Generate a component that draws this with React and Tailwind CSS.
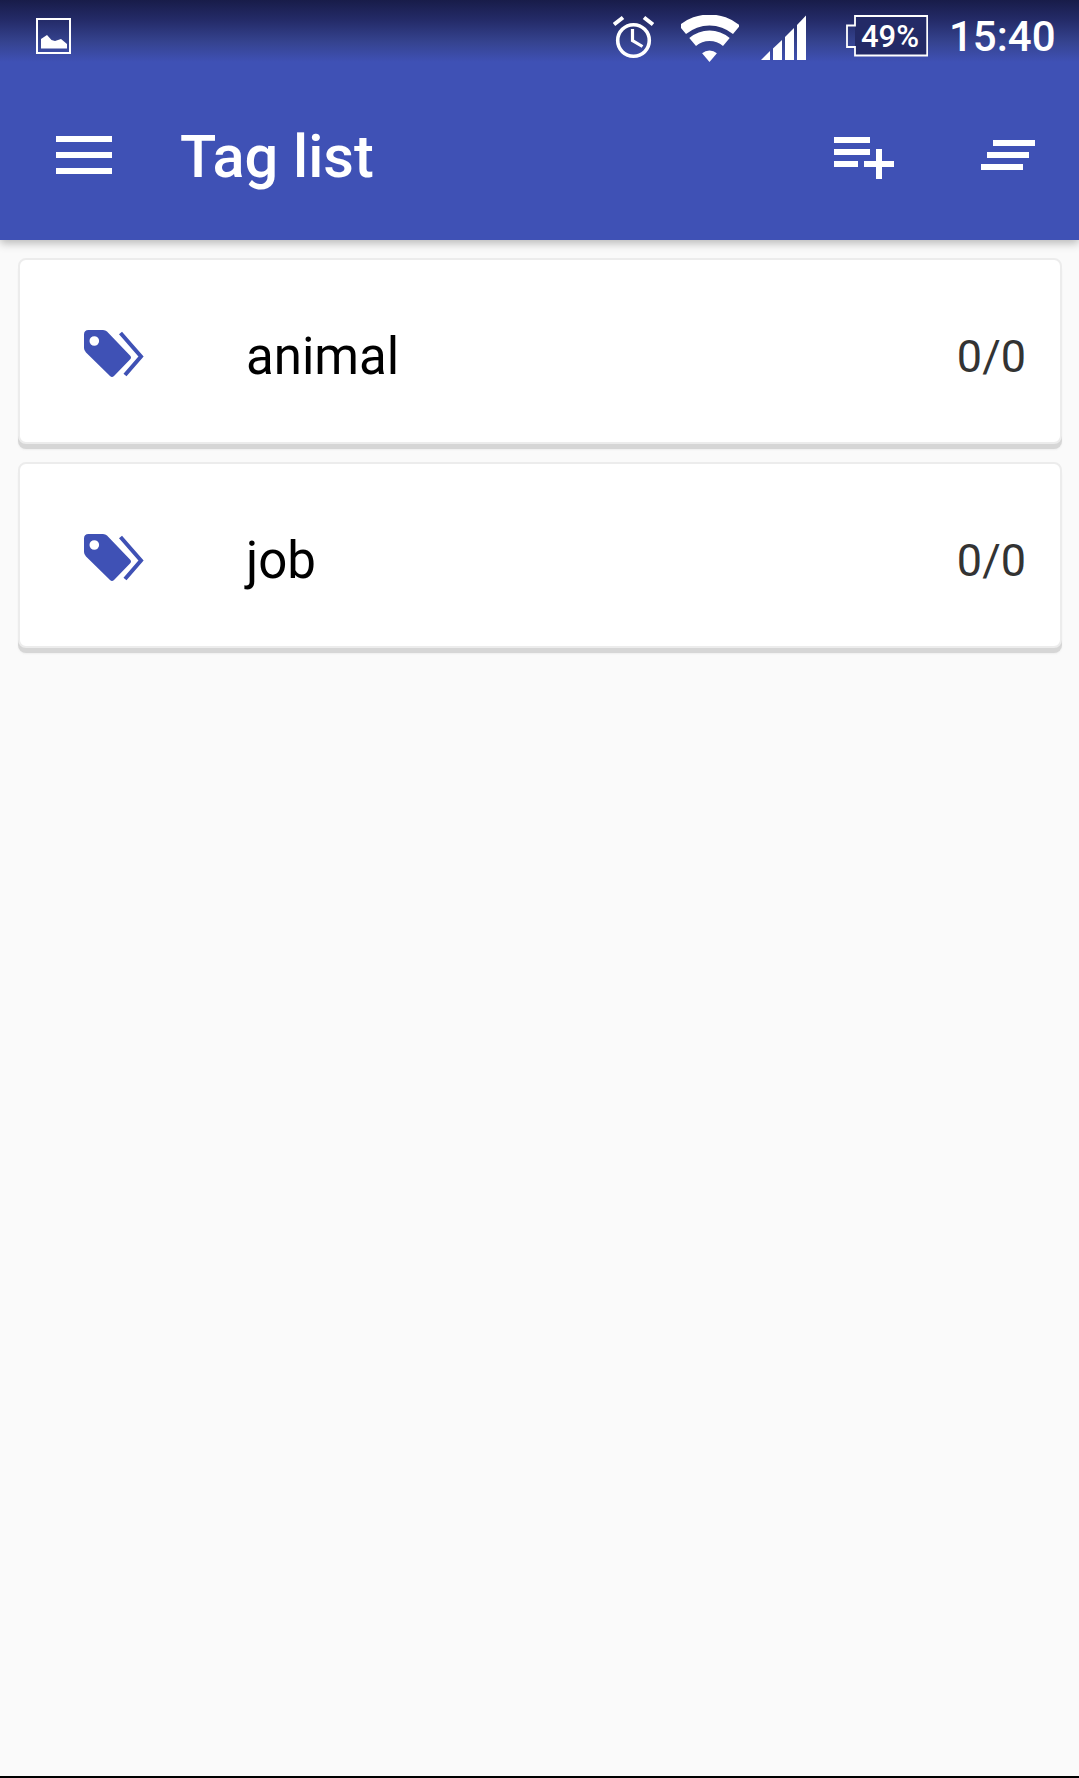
const sector = (r1, r2, a = 40) => {
  const s = Math.sin((a * Math.PI) / 180);
  const c = Math.cos((a * Math.PI) / 180);
  const cx = 28.5;
  const cy = 47;
  const p = (r, sign) => `${(cx + sign * r * s).toFixed(1)} ${(cy - r * c).toFixed(1)}`;
  if (r2 === 0) return `M${cx} ${cy}L${p(r1, -1)}A${r1} ${r1} 0 0 1 ${p(r1, 1)}Z`;
  return `M${p(r2, -1)}L${p(r1, -1)}A${r1} ${r1} 0 0 1 ${p(r1, 1)}L${p(r2, 1)}A${r2} ${r2} 0 0 0 ${p(r2, -1)}Z`;
};

function ImageIcon() {
  return (
    <svg width="35" height="36" viewBox="0 0 35 36" fill="none" className="mt-[18px] ml-[36px] shrink-0">
      <rect x="1" y="1" width="33" height="34" stroke="white" strokeWidth="2" />
      <path d="M5 30.500V21L11 17L15.500 22L19 23L25 21L31 26V30.500Z" fill="white" />
    </svg>
  );
}

function AlarmIcon() {
  return (
    <svg width="42" height="44" viewBox="0 0 42 44" fill="none" className="mt-[15px] shrink-0" stroke="white">
      <circle cx="20.500" cy="25.500" r="15.800" strokeWidth="3.600" />
      <path d="M19.500 14V25.500L29.500 31.500" strokeWidth="3.200" />
      <path d="M1 9.500L10 2.500M31 2.500L40 9.500" strokeWidth="4" />
    </svg>
  );
}

function WifiIcon() {
  return (
    <svg width="58" height="47" viewBox="0 0 58 47" fill="white" className="mt-[15px] shrink-0">
      <path d={sector(47.5, 36.5)} />
      <path d={sector(31.5, 21)} />
      <path d={sector(11.5, 0)} />
    </svg>
  );
}

function SignalIcon() {
  return (
    <svg width="45" height="45" viewBox="0 0 45 45" fill="white" className="mt-[15px] shrink-0">
      <path d="M0 45L9 36V45Z" />
      <path d="M12 33.500L21 25V45H12Z" />
      <path d="M24 22L33 13V45H24Z" />
      <path d="M36 10L45 0.500V45H36Z" />
    </svg>
  );
}

function Battery() {
  return (
    <div className="relative mt-[15px] w-[82px] h-[42px] shrink-0 flex items-center justify-end pr-[9px]">
      <svg width="82" height="42" viewBox="0 0 82 42" className="absolute inset-0">
        <path d="M9 2H81V40.500H9Z" fill="#232a66" />
        <path
          d="M9 1H81.200V40.500H9V32H1V10.500H9Z"
          fill="none"
          stroke="white"
          strokeWidth="1.800"
        />
      </svg>
      <span className="relative text-white text-[31px] leading-none font-medium">49%</span>
    </div>
  );
}

function MenuIcon() {
  return (
    <svg width="56" height="38" viewBox="0 0 56 38" fill="white" className="shrink-0">
      <rect y="0" width="56" height="6" />
      <rect y="16" width="56" height="6" />
      <rect y="32" width="56" height="6" />
    </svg>
  );
}

function AddListIcon() {
  return (
    <svg width="60" height="42" viewBox="0 0 60 42" fill="white" className="shrink-0 mt-[3px]">
      <rect x="0" y="0" width="36" height="6" />
      <rect x="0" y="12" width="36" height="6" />
      <rect x="0" y="24" width="24" height="6" />
      <rect x="30" y="24" width="30" height="6" />
      <rect x="42" y="12" width="6" height="30" />
    </svg>
  );
}

function SortIcon() {
  return (
    <svg width="54" height="30" viewBox="0 0 54 30" fill="white" className="shrink-0 -mt-[3px]">
      <rect x="12" y="0" width="42" height="6" />
      <rect x="6" y="12" width="42" height="6" />
      <rect x="0" y="24" width="42" height="6" />
    </svg>
  );
}

function TagsIcon() {
  return (
    <svg width="60" height="49" viewBox="0 0 60 49" className="shrink-0">
      <path
        d="M0 5.500Q0 1 4.500 1H19Q21.500 1 23 2.500L46 26.500Q48 28.500 46 30.500L30 47Q28 49 26 47L2 23.500Q0 21.500 0 19ZM10.300 7.200A4.800 4.800 0 1 0 10.310 16.800A4.800 4.800 0 1 0 10.300 7.200Z"
        fill="#3f51b5"
        fillRule="evenodd"
      />
      <path d="M36.500 4L57 27.500L41 46" fill="none" stroke="#3f51b5" strokeWidth="4" />
    </svg>
  );
}

function TagCard({ name, count }) {
  return (
    <div className="h-[186px] mb-[1px] rounded-[8px] bg-white border-2 border-[#ececec] shadow-[0_5px_0_#d6d6d6,0_6px_2px_#eeeeee] flex items-center">
      <div className="ml-[64px] w-[162px] mt-[5px]">
        <TagsIcon />
      </div>
      <span className="text-[51px] leading-none text-black flex-1 mt-[10px]">{name}</span>
      <span className="text-[45px] leading-none text-[#333333] mr-[34px] mt-[10px]">{count}</span>
    </div>
  );
}

export default function App() {
  return (
    <div className="w-[1079px] h-[1778px] bg-[#fafafa] flex flex-col overflow-hidden font-['Roboto',sans-serif]">
      <header className="h-[240px] shrink-0 flex flex-col relative z-10 bg-[linear-gradient(to_bottom,#181c49_0px,#242b68_20px,#35438f_42px,#3f51b5_62px,#3f51b5_100%)] shadow-[0_3px_9px_rgba(0,0,0,0.28)]">
        <div className="h-[72px] shrink-0 flex items-start">
          <ImageIcon />
          <div className="ml-[542px]"><AlarmIcon /></div>
          <div className="ml-[26px]"><WifiIcon /></div>
          <div className="ml-[22px]"><SignalIcon /></div>
          <div className="ml-[40px]"><Battery /></div>
          <span className="ml-[21px] mt-[15px] text-white text-[42px] leading-[44px] font-medium">15:40</span>
        </div>
        <div className="flex-1 flex items-center">
          <div className="ml-[56px] -mt-[3px]"><MenuIcon /></div>
          <h1 className="ml-[68px] flex-1 text-white text-[59.5px] leading-none font-medium mt-[3px]">Tag list</h1>
          <AddListIcon />
          <div className="ml-[87px] mr-[44px]"><SortIcon /></div>
        </div>
      </header>
      <main className="flex-1 flex flex-col gap-[17px] pt-[18px] pl-[18px] pr-[17px]">
        <TagCard name="animal" count="0/0" />
        <TagCard name="job" count="0/0" />
      </main>
      <div className="h-[2px] shrink-0 bg-black" />
    </div>
  );
}
